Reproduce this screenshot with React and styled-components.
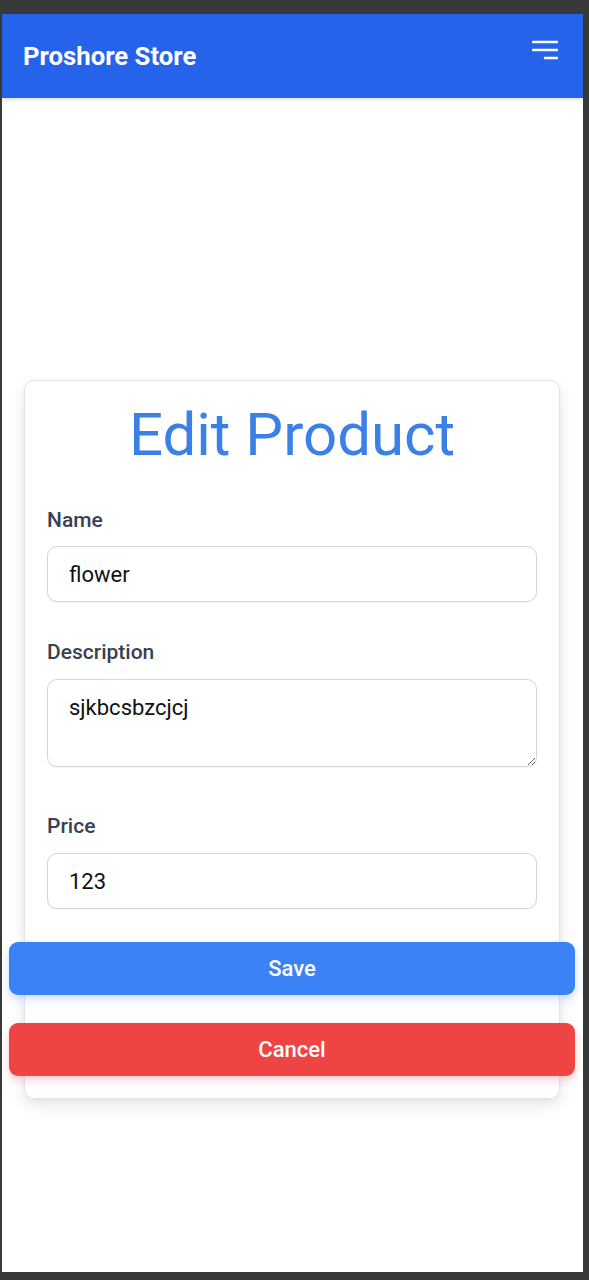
import React from "react";
import styled, { createGlobalStyle } from "styled-components";

const Global = createGlobalStyle`
  * { box-sizing: border-box; }
  html, body { margin: 0; padding: 0; background: #393939; }
  body { font-family: Roboto, "Liberation Sans", Arial, sans-serif; }
`;

const Frame = styled.div`
  padding: 14px 6px 8px 2px;
  background: #393939;
  min-height: 1280px;
`;

const Page = styled.div`
  background: #ffffff;
  min-height: 1258px;
  display: flex;
  flex-direction: column;
`;

const Header = styled.header`
  height: 84px;
  background: #2563eb;
  display: flex;
  align-items: center;
  justify-content: space-between;
  padding: 0 25px 0 21px;
  box-shadow: 0 2px 4px rgba(0, 0, 0, 0.12);
`;

const Brand = styled.h1`
  margin: 0;
  color: #ffffff;
  font-size: 25.7px;
  font-weight: 700;
`;

const MenuButton = styled.button`
  border: 0;
  background: transparent;
  padding: 0;
  width: 26px;
  height: 22px;
  display: flex;
  margin-top: -10px;
  cursor: pointer;
`;

const Card = styled.section`
  margin: 282px 23px 0 22px;
  border: 1px solid #e3e5e8;
  border-radius: 10px;
  background: #ffffff;
  box-shadow: 0 8px 18px rgba(0, 0, 0, 0.08), 0 2px 6px rgba(0, 0, 0, 0.05);
  padding: 24px 22px 22px;
  display: flex;
  flex-direction: column;
`;

const Title = styled.h2`
  margin: 0 0 41px;
  font-size: 60px;
  line-height: 60px;
  font-weight: 400;
  color: #3b80e6;
  text-align: center;
`;

const Field = styled.div`
  display: flex;
  flex-direction: column;
  gap: ${(p) => p.$gap}px;
  margin-bottom: ${(p) => p.$after}px;
`;

const Label = styled.label`
  font-size: 21px;
  line-height: 28px;
  font-weight: 500;
  color: #374151;
`;

const Input = styled.input`
  height: 56px;
  width: 100%;
  border: 1px solid #d4d6da;
  border-radius: 10px;
  padding: 0 21px;
  font-family: Roboto, "Liberation Sans", Arial, sans-serif;
  font-size: 22px;
  color: #111111;
  background: #fff;
  outline: none;
  box-shadow: 0 1px 2px rgba(0, 0, 0, 0.04);
`;

const TextArea = styled.textarea`
  display: block;
  height: 88px;
  width: 100%;
  border: 1px solid #d4d6da;
  border-radius: 10px;
  padding: 11px 21px;
  font-family: Roboto, "Liberation Sans", Arial, sans-serif;
  font-size: 22px;
  line-height: 33px;
  color: #111111;
  resize: vertical;
  outline: none;
  box-shadow: 0 1px 2px rgba(0, 0, 0, 0.04);
`;

const Button = styled.button`
  display: block;
  margin: 0 -38px ${(p) => p.$after}px;
  height: 53px;
  border: 0;
  border-radius: 9px;
  background: ${(p) => p.$bg};
  color: #ffffff;
  font-family: Roboto, "Liberation Sans", Arial, sans-serif;
  font-size: 22px;
  font-weight: 500;
  cursor: pointer;
  box-shadow: 0 4px 8px ${(p) => p.$shadow};
`;

const MenuIcon = () => (
  <svg width="26" height="22" viewBox="0 0 26 22" fill="none">
    <path
      d="M1 2h24M1 10h24M13 18h12"
      stroke="#ffffff"
      strokeWidth="2.6"
      strokeLinecap="round"
    />
  </svg>
);

export default function App() {
  return (
    <>
      <Global />
      <Frame>
        <Page>
          <Header>
            <Brand>Proshore Store</Brand>
            <MenuButton aria-label="Menu">
              <MenuIcon />
            </MenuButton>
          </Header>
          <Card>
            <Title>Edit Product</Title>
            <Field $gap={12} $after={36}>
              <Label htmlFor="name">Name</Label>
              <Input id="name" defaultValue="flower" />
            </Field>
            <Field $gap={13} $after={45}>
              <Label htmlFor="desc">Description</Label>
              <TextArea id="desc" defaultValue="sjkbcsbzcjcj" />
            </Field>
            <Field $gap={13} $after={33}>
              <Label htmlFor="price">Price</Label>
              <Input id="price" defaultValue="123" />
            </Field>
            <Button $bg="#3b82f6" $shadow="rgba(59,130,246,0.25)" $after={28}>
              Save
            </Button>
            <Button $bg="#ef4444" $shadow="rgba(239,68,68,0.25)" $after={0}>
              Cancel
            </Button>
          </Card>
        </Page>
      </Frame>
    </>
  );
}
